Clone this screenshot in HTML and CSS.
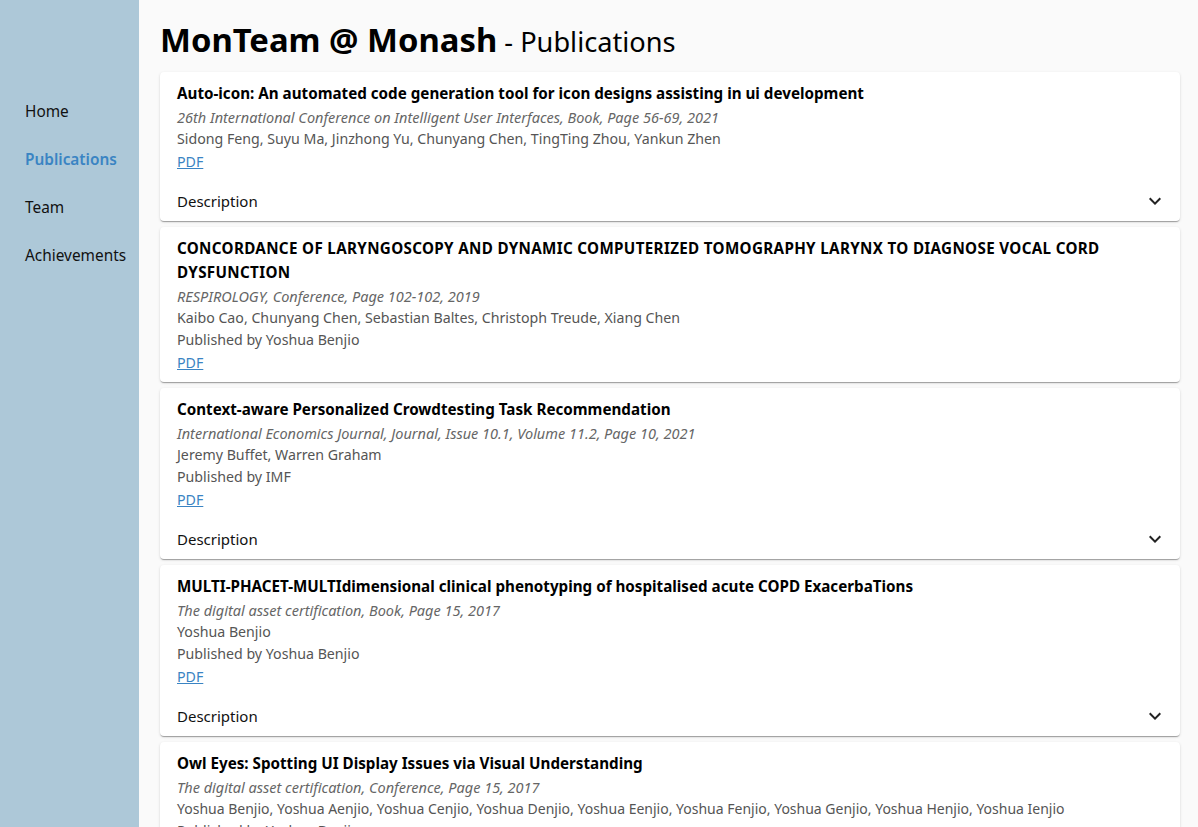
FILE: index.html
```html
<!DOCTYPE html>
<html lang="en">
<head>
<meta charset="utf-8">
<title>MonTeam @ Monash - Publications</title>
<link rel="stylesheet" href="styles.css">
</head>
<body>
<div class="app">
  <nav class="sidebar">
    <a class="nav-item" href="#">Home</a>
    <a class="nav-item active" href="#">Publications</a>
    <a class="nav-item" href="#">Team</a>
    <a class="nav-item" href="#">Achievements</a>
  </nav>
  <main class="main">
    <h1 class="page-title"><span class="brand">MonTeam @ Monash</span><span class="sub"> - Publications</span></h1>

    <article class="card">
      <div class="card-body">
        <div class="pub-title">Auto-icon: An automated code generation tool for icon designs assisting in ui development</div>
        <div class="pub-venue">26th International Conference on Intelligent User Interfaces, Book, Page 56-69, 2021</div>
        <div class="pub-line">Sidong Feng, Suyu Ma, Jinzhong Yu, Chunyang Chen, TingTing Zhou, Yankun Zhen</div>
        <a class="pub-link" href="#">PDF</a>
      </div>
      <div class="desc-row">
        <span>Description</span>
        <svg class="chev" viewBox="0 0 24 24" width="24" height="24"><path d="M16.59 8.59 12 13.17 7.41 8.59 6 10l6 6 6-6z"/></svg>
      </div>
    </article>

    <article class="card">
      <div class="card-body">
        <div class="pub-title caps">CONCORDANCE OF LARYNGOSCOPY AND DYNAMIC COMPUTERIZED TOMOGRAPHY LARYNX TO DIAGNOSE VOCAL CORD DYSFUNCTION</div>
        <div class="pub-venue">RESPIROLOGY, Conference, Page 102-102, 2019</div>
        <div class="pub-line">Kaibo Cao, Chunyang Chen, Sebastian Baltes, Christoph Treude, Xiang Chen</div>
        <div class="pub-line">Published by Yoshua Benjio</div>
        <a class="pub-link" href="#">PDF</a>
      </div>
    </article>

    <article class="card">
      <div class="card-body">
        <div class="pub-title">Context-aware Personalized Crowdtesting Task Recommendation</div>
        <div class="pub-venue">International Economics Journal, Journal, Issue 10.1, Volume 11.2, Page 10, 2021</div>
        <div class="pub-line">Jeremy Buffet, Warren Graham</div>
        <div class="pub-line">Published by IMF</div>
        <a class="pub-link" href="#">PDF</a>
      </div>
      <div class="desc-row">
        <span>Description</span>
        <svg class="chev" viewBox="0 0 24 24" width="24" height="24"><path d="M16.59 8.59 12 13.17 7.41 8.59 6 10l6 6 6-6z"/></svg>
      </div>
    </article>

    <article class="card">
      <div class="card-body">
        <div class="pub-title">MULTI-PHACET-MULTIdimensional clinical phenotyping of hospitalised acute COPD ExacerbaTions</div>
        <div class="pub-venue">The digital asset certification, Book, Page 15, 2017</div>
        <div class="pub-line">Yoshua Benjio</div>
        <div class="pub-line">Published by Yoshua Benjio</div>
        <a class="pub-link" href="#">PDF</a>
      </div>
      <div class="desc-row">
        <span>Description</span>
        <svg class="chev" viewBox="0 0 24 24" width="24" height="24"><path d="M16.59 8.59 12 13.17 7.41 8.59 6 10l6 6 6-6z"/></svg>
      </div>
    </article>

    <article class="card">
      <div class="card-body">
        <div class="pub-title">Owl Eyes: Spotting UI Display Issues via Visual Understanding</div>
        <div class="pub-venue">The digital asset certification, Conference, Page 15, 2017</div>
        <div class="pub-line authors-long">Yoshua Benjio, Yoshua Aenjio, Yoshua Cenjio, Yoshua Denjio, Yoshua Eenjio, Yoshua Fenjio, Yoshua Genjio, Yoshua Henjio, Yoshua Ienjio</div>
        <div class="pub-line">Published by Yoshua Benjio</div>
        <a class="pub-link" href="#">PDF</a>
      </div>
    </article>
  </main>
</div>
</body>
</html>
```
FILE: styles.css
```css
html, body {
  margin: 0;
  padding: 0;
  height: 100%;
  overflow: hidden;
}
body {
  font-family: "Noto Sans", "Open Sans", sans-serif;
  background: #fafafa;
  color: #000;
}
.app {
  display: flex;
  height: 100vh;
}
.sidebar {
  flex: 0 0 139px;
  background: #adc8d8;
  display: flex;
  flex-direction: column;
  padding-top: 87px;
  box-sizing: border-box;
}
.nav-item {
  display: flex;
  align-items: center;
  height: 48px;
  padding-left: 25px;
  font-size: 15.4px;
  color: #111;
  text-decoration: none;
}
.nav-item.active {
  color: #3a84c3;
  font-weight: 600;
}
.main {
  flex: 1;
  padding: 0 18px 0 21px;
  display: flex;
  flex-direction: column;
  gap: 6px;
  min-width: 0;
}
.page-title {
  margin: 18px 0 4px;
  font-weight: normal;
  line-height: 44px;
  height: 44px;
  white-space: nowrap;
}
.brand {
  font-size: 32.8px;
  font-weight: 700;
}
.sub {
  font-size: 27.2px;
}
.card {
  background: #fff;
  border-radius: 4px;
  box-shadow: 0 2px 1px -1px rgba(0,0,0,0.2), 0 1px 1px 0 rgba(0,0,0,0.14), 0 1px 3px 0 rgba(0,0,0,0.12);
  flex: 0 0 auto;
}
.card-body {
  padding: 9px 16px 8px 17px;
  display: flex;
  flex-direction: column;
  align-items: flex-start;
}
.pub-title {
  font-size: 15.2px;
  font-weight: 700;
  line-height: 24px;
  margin-bottom: 1px;
}
.pub-title.caps {
  letter-spacing: 0.33px;
}
.pub-venue {
  font-size: 14.5px;
  font-style: italic;
  color: #666;
  line-height: 22px;
}
.pub-line {
  font-size: 14.2px;
  color: #555;
  line-height: 22px;
}
.pub-line.authors-long {
  font-size: 14px;
}
.pub-link {
  font-size: 14.2px;
  line-height: 22px;
  margin-top: 1px;
  color: #3a84c3;
}
.desc-row {
  display: flex;
  align-items: center;
  justify-content: space-between;
  height: 40px;
  padding: 0 13px 0 17px;
  font-size: 15px;
  color: #111;
}
.chev {
  fill: #222;
}
```
